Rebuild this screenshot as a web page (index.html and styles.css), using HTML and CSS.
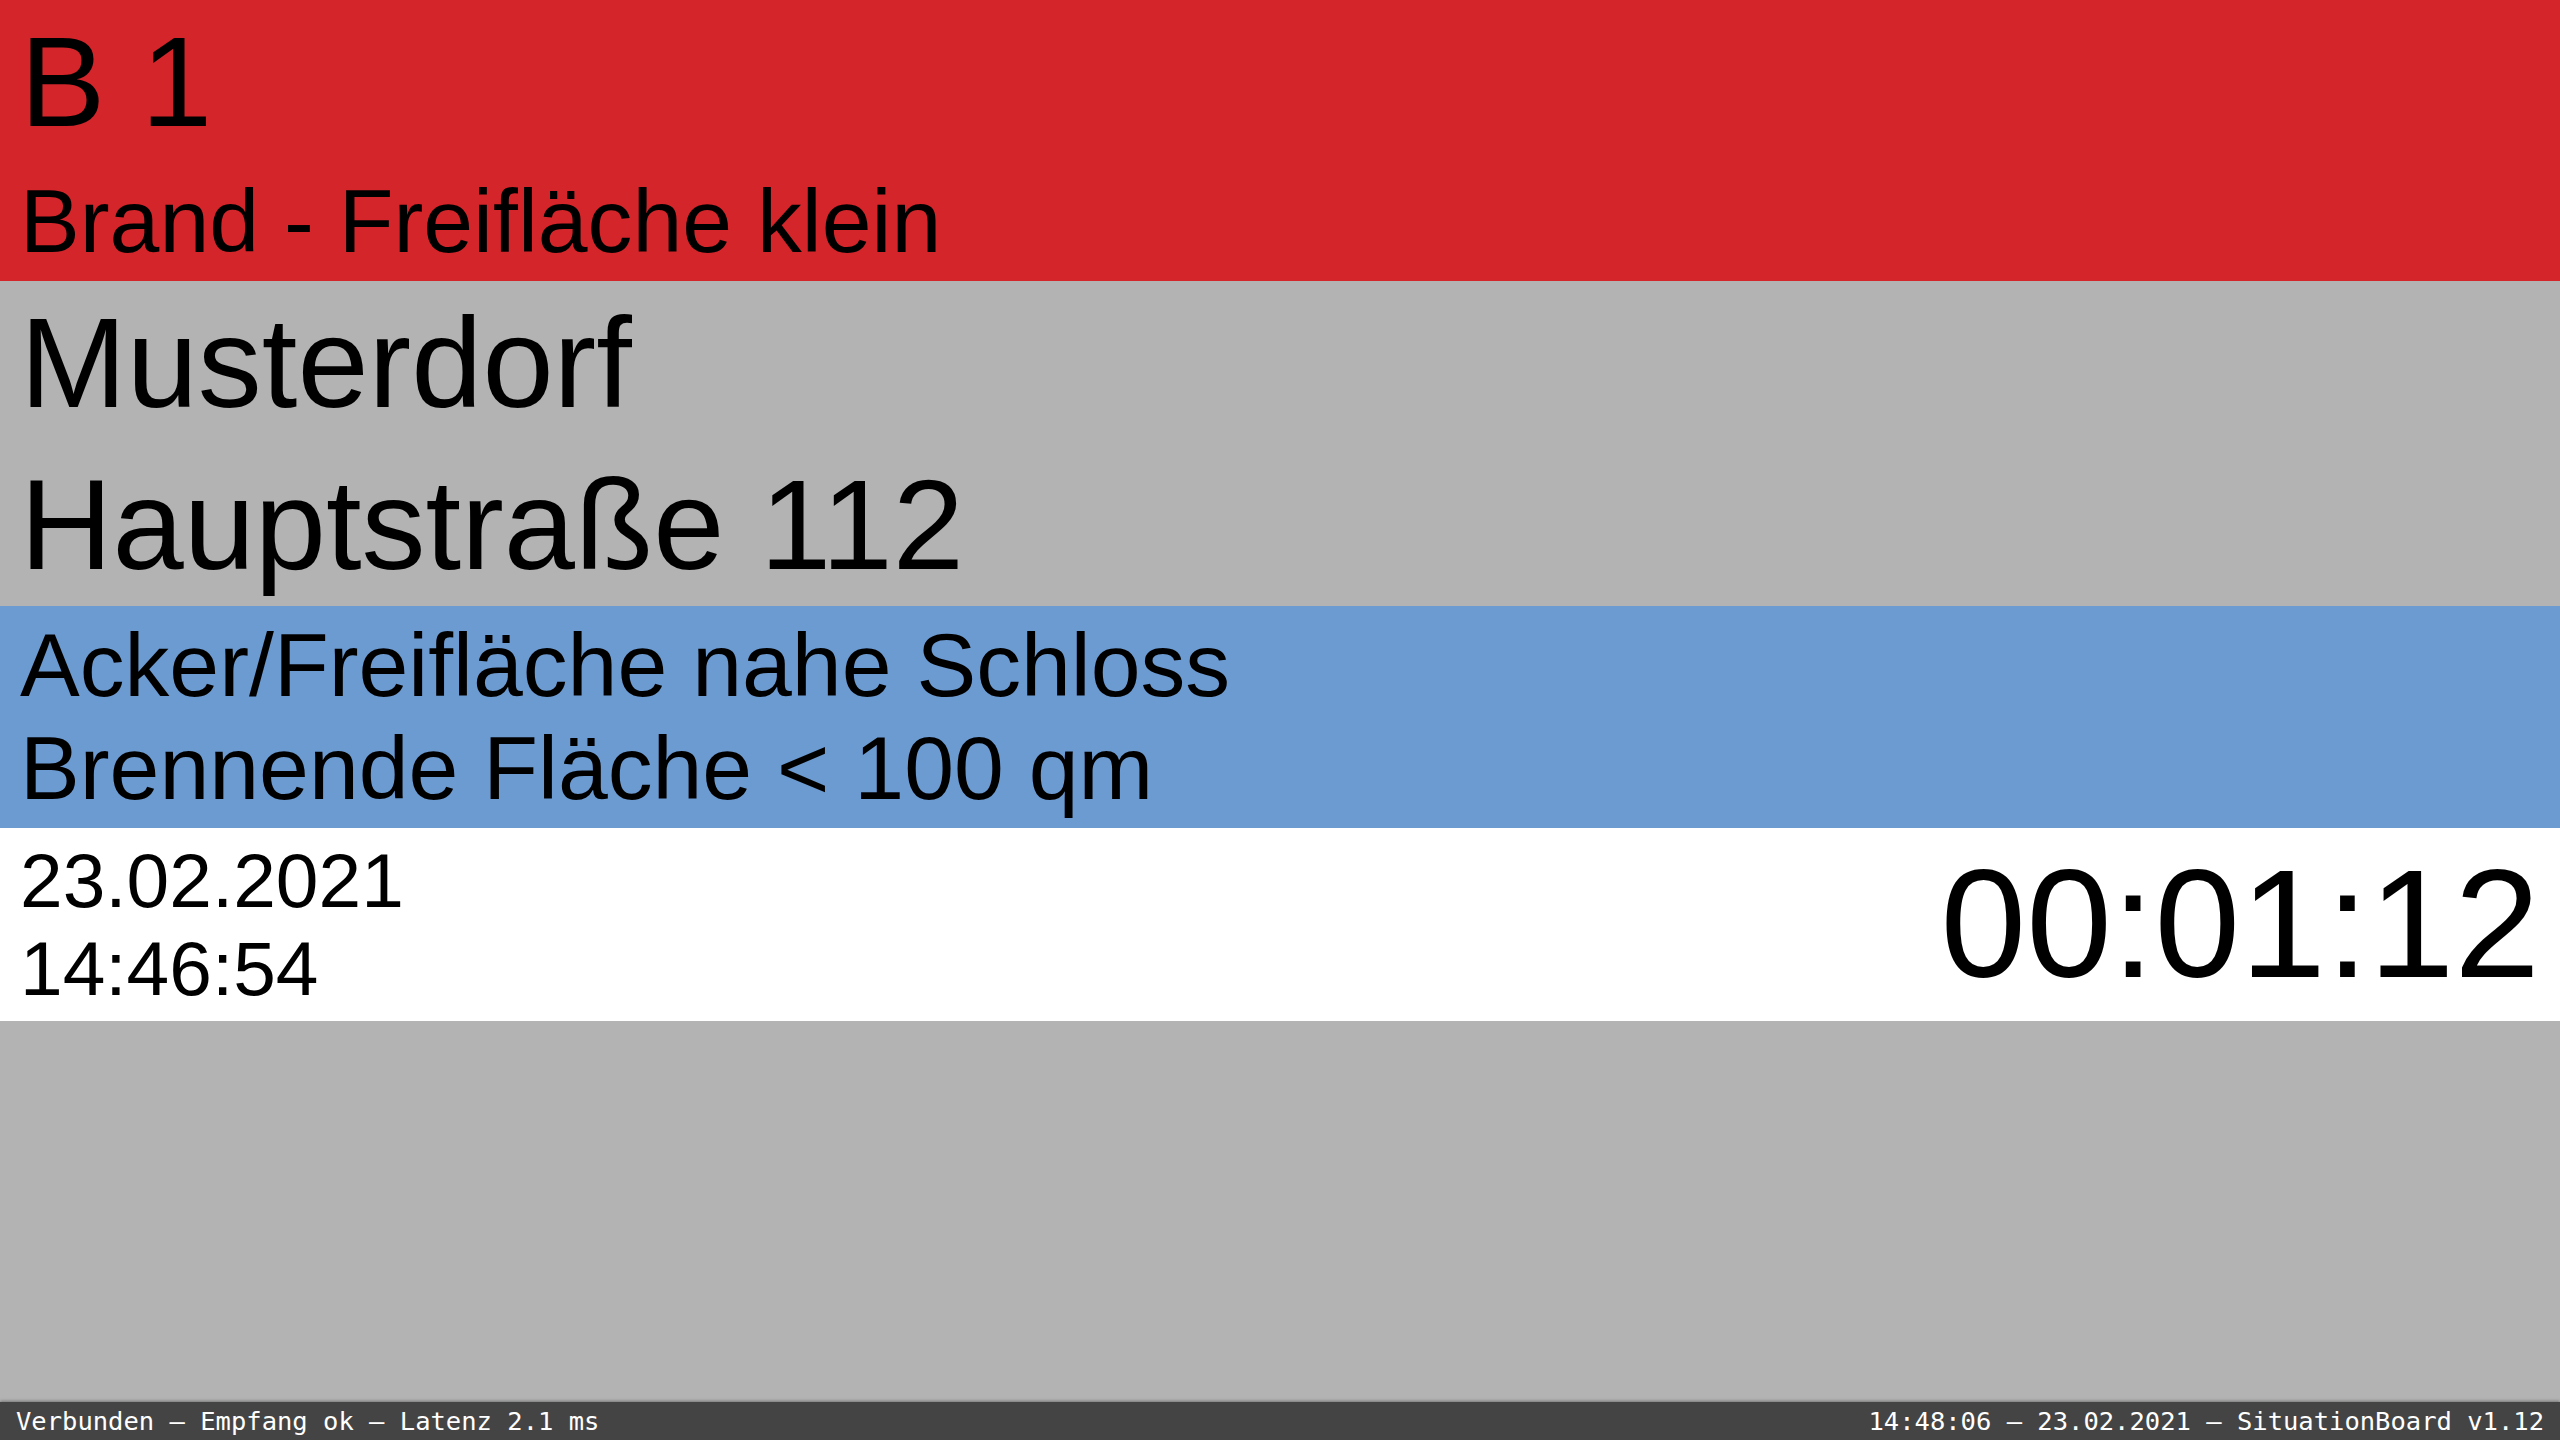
FILE: index.html
```html
<!DOCTYPE html>
<html lang="de">
<head>
<meta charset="utf-8">
<title>SituationBoard</title>
<link rel="stylesheet" href="styles.css">
</head>
<body>
<div class="board">
  <section class="band band-red">
    <div class="row big">B 1</div>
    <div class="row mid">Brand - Freifläche klein</div>
  </section>
  <section class="band band-gray">
    <div class="row big">Musterdorf</div>
    <div class="row big">Hauptstraße 112</div>
  </section>
  <section class="band band-blue">
    <div class="row mid block">
      <div>Acker/Freifläche nahe Schloss</div>
      <div>Brennende Fläche &lt; 100 qm</div>
    </div>
  </section>
  <section class="band band-white">
    <div class="row timebar">
      <div class="stamp">
        <div>23.02.2021</div>
        <div>14:46:54</div>
      </div>
      <div class="elapsed">00:01:12</div>
    </div>
  </section>
  <div class="filler"></div>
  <footer class="status">
    <span>Verbunden — Empfang ok — Latenz 2.1 ms</span>
    <span>14:48:06 — 23.02.2021 — SituationBoard v1.12</span>
  </footer>
</div>
</body>
</html>
```

FILE: styles.css
```css
html, body {
  margin: 0;
  padding: 0;
  height: 100%;
}

body {
  font-family: "Liberation Sans", Arial, sans-serif;
  color: #000;
  background: #b3b3b3;
}

.board {
  display: flex;
  flex-direction: column;
  height: 100vh;
}

.band-red { background: #d3252a; }
.band-gray { background: #b3b3b3; }
.band-blue { background: #6c9bd2; }
.band-white { background: #ffffff; }

.row {
  padding: 7.75px 20px;
  white-space: nowrap;
}

.big {
  font-size: 128px;
  line-height: 147px;
}

.mid {
  font-size: 89.6px;
  line-height: 103px;
}

.block {
  padding-top: 8px;
  padding-bottom: 8px;
}

.timebar {
  display: flex;
  align-items: center;
  justify-content: space-between;
  padding-top: 8px;
  padding-bottom: 8px;
  padding-right: 20px;
}

.stamp {
  font-size: 76.7px;
  line-height: 88px;
}

.elapsed {
  font-size: 154px;
  line-height: 177px;
}

.filler {
  flex: 1;
  background: #b3b3b3;
}

.status {
  height: 38px;
  flex: 0 0 38px;
  background: #444444;
  color: #ffffff;
  display: flex;
  align-items: center;
  justify-content: space-between;
  padding: 0 16px;
  font-family: "DejaVu Sans Mono", "Liberation Mono", monospace;
  font-size: 25.5px;
  line-height: 38px;
  box-shadow: 0 -1px 3px rgba(0, 0, 0, 0.35);
  white-space: nowrap;
}
```
